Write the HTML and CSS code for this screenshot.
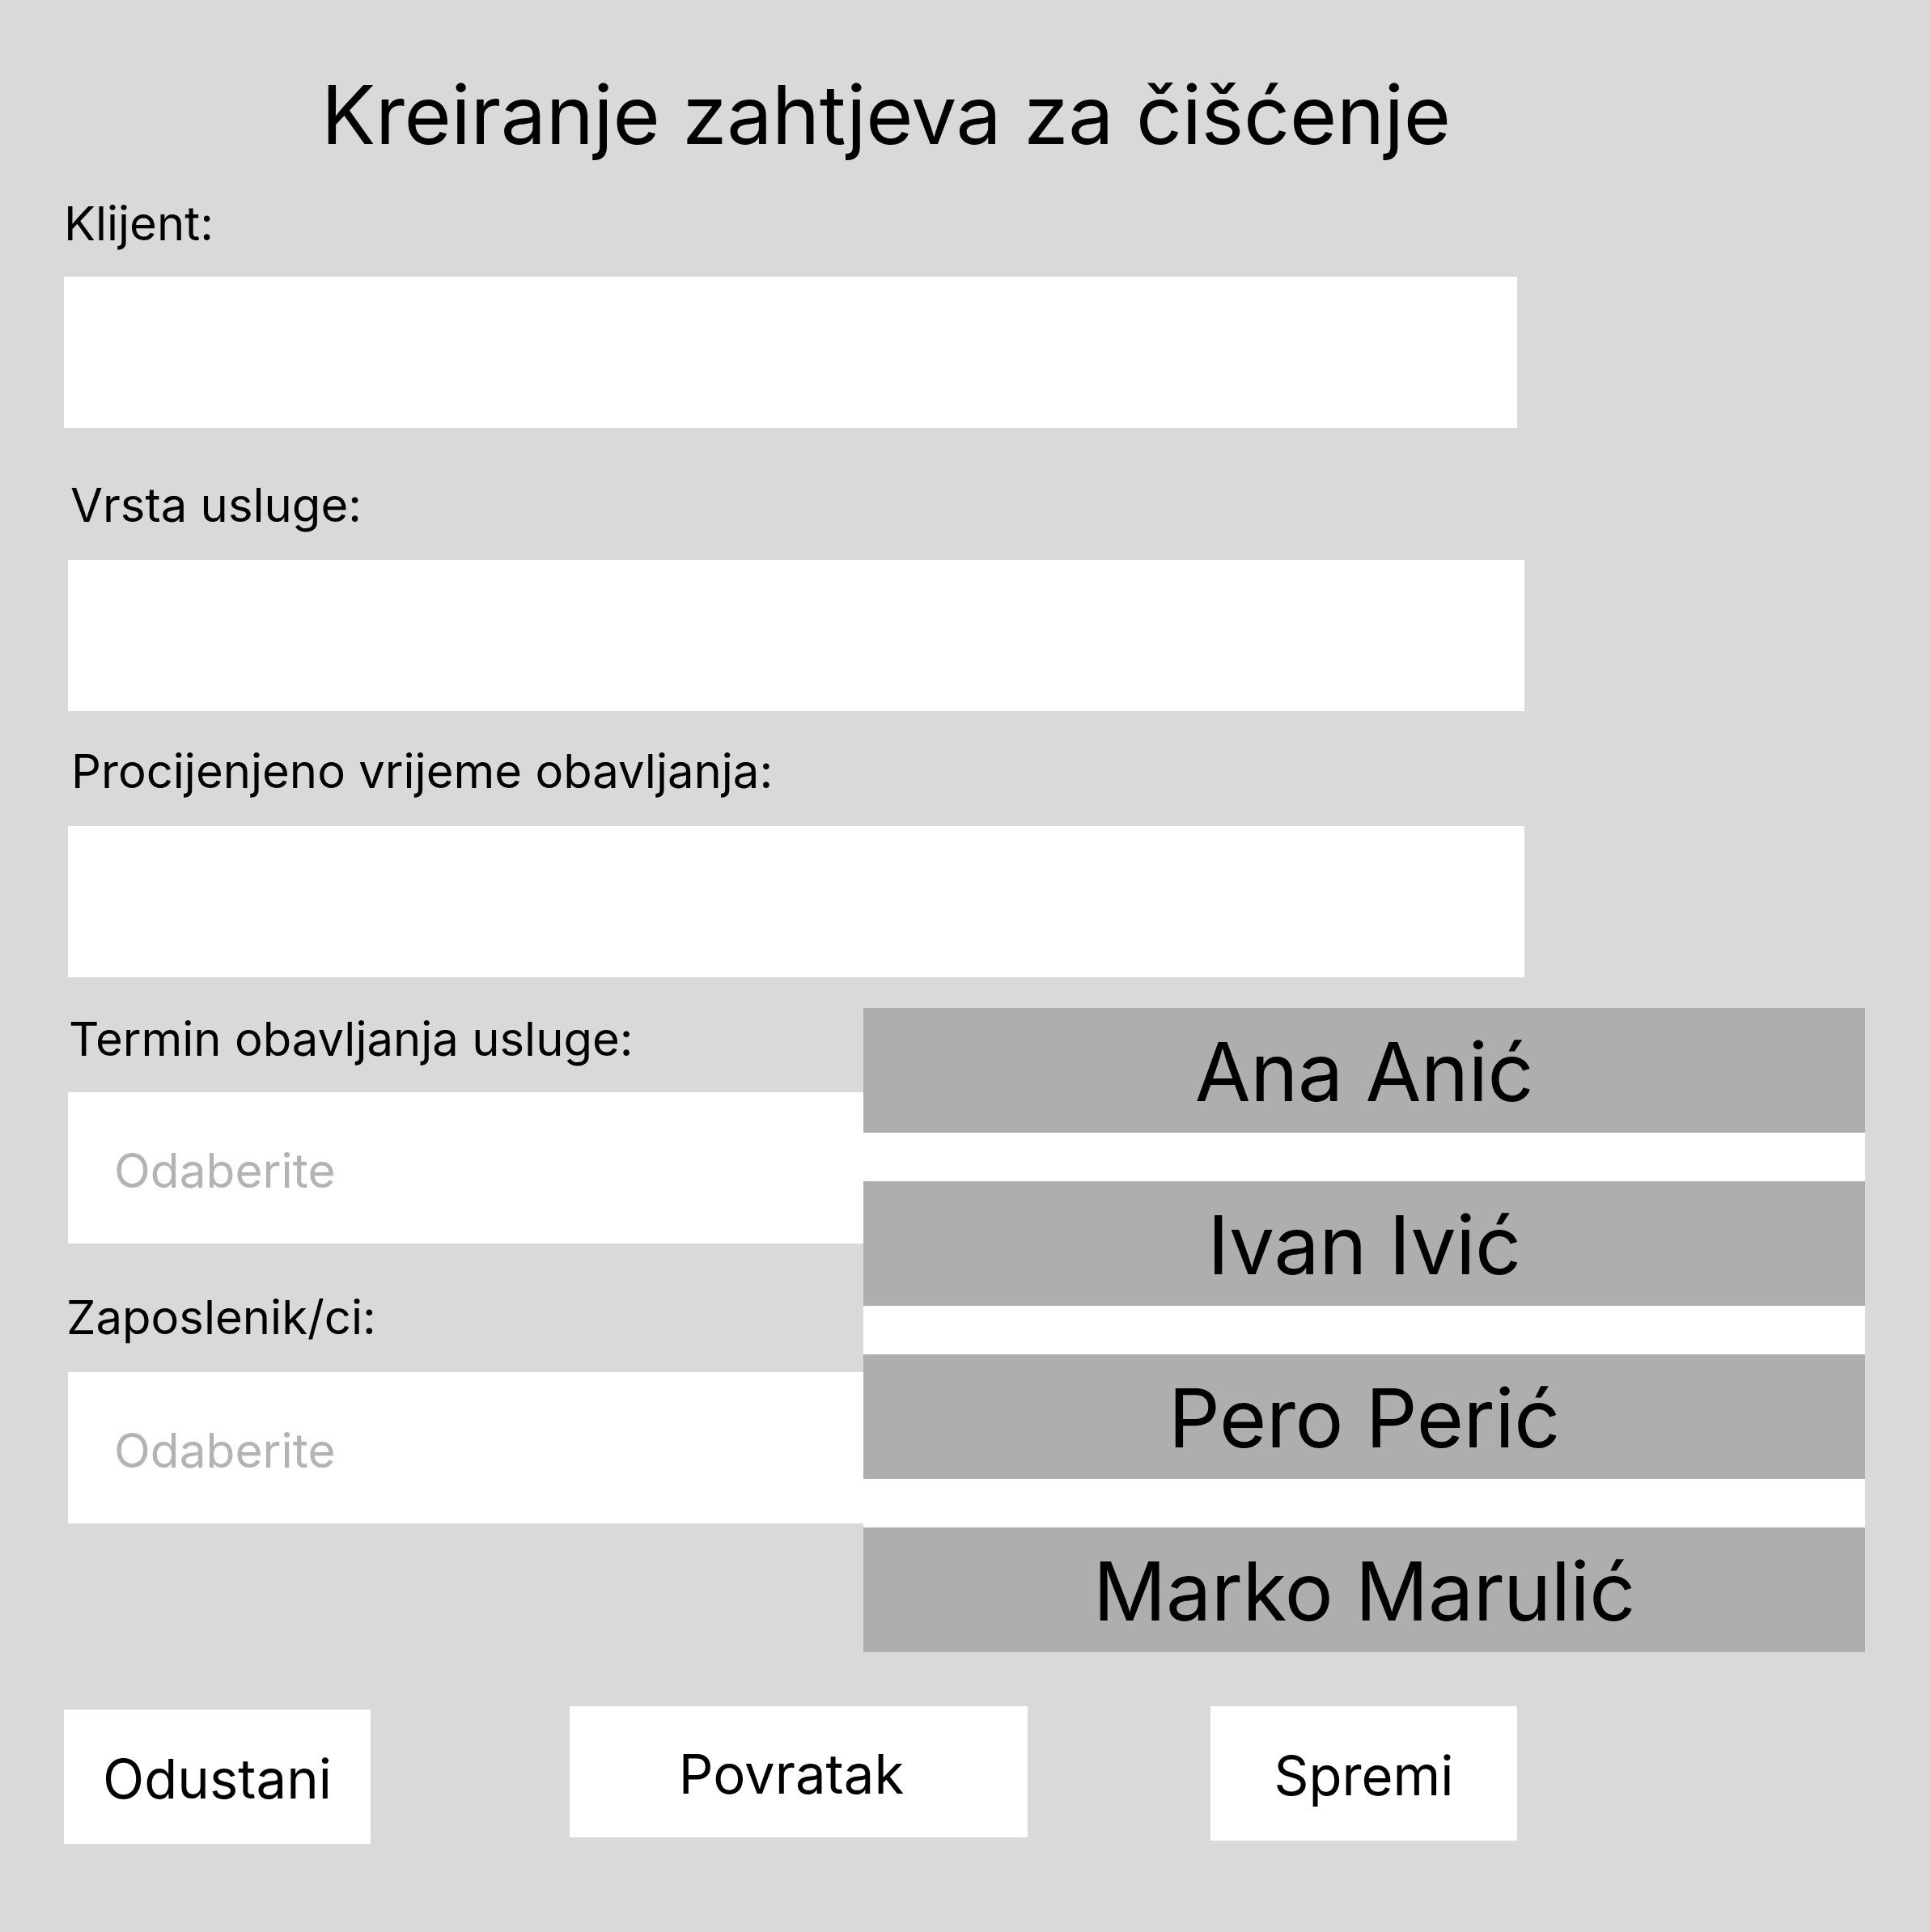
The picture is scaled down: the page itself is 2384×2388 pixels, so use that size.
FILE: index.html
```html
<!DOCTYPE html>
<html lang="hr">
<head>
<meta charset="utf-8">
<title>Kreiranje zahtjeva za čišćenje</title>
<link rel="stylesheet" href="styles.css">
</head>
<body>
<main class="page">
  <h1 class="title">Kreiranje zahtjeva za čišćenje</h1>

  <div class="field field-client">
    <label class="label">Klijent:</label>
    <div class="input"></div>
  </div>

  <div class="field field-service">
    <label class="label">Vrsta usluge:</label>
    <div class="input"></div>
  </div>

  <div class="field field-time">
    <label class="label">Procijenjeno vrijeme obavljanja:</label>
    <div class="input"></div>
  </div>

  <div class="field field-term">
    <label class="label">Termin obavljanja usluge:</label>
    <div class="input select"><span class="placeholder">Odaberite</span></div>
  </div>

  <div class="field field-staff">
    <label class="label">Zaposlenik/ci:</label>
    <div class="input select"><span class="placeholder">Odaberite</span></div>
  </div>

  <div class="actions">
    <button class="btn btn-cancel">Odustani</button>
    <button class="btn btn-back">Povratak</button>
    <button class="btn btn-save">Spremi</button>
  </div>

  <ul class="dropdown">
    <li class="option">Ana Anić</li>
    <li class="option">Ivan Ivić</li>
    <li class="option">Pero Perić</li>
    <li class="option">Marko Marulić</li>
  </ul>
</main>
</body>
</html>
```

FILE: styles.css
```css
* { box-sizing: border-box; }

html, body {
  margin: 0;
  padding: 0;
}

body {
  background: #d9d9d9;
  font-family: "Inter", "Noto Sans", sans-serif;
  color: #000;
  width: 2384px;
  height: 2388px;
  overflow: hidden;
}

.page {
  position: relative;
  width: 2384px;
  height: 2388px;
  padding-top: 82px;
  display: flex;
  flex-direction: column;
}

.title {
  margin: 0;
  padding-left: 397px;
  font-size: 100px;
  font-weight: 400;
  letter-spacing: -0.3px;
  line-height: 120px;
  height: 120px;
}

.field {
  display: flex;
  flex-direction: column;
}

.label {
  display: block;
  font-size: 58px;
  line-height: 70px;
  height: 70px;
}

.input {
  height: 187px;
  background: #fff;
  width: 1800px;
  margin-left: 84px;
  margin-top: 33px;
}

.field-client { margin-top: 39px; }
.field-client .label { padding-left: 79px; }
.field-client .input { margin-left: 79px; width: 1796px; margin-top: 31px; }

.field-service { margin-top: 60px; }
.field-service .label { padding-left: 87px; }

.field-time { margin-top: 39px; }
.field-time .label { padding-left: 88px; }

.field-term { margin-top: 41px; }
.field-term .label { padding-left: 85px; }
.field-term .input { margin-top: 31px; }

.field-staff { margin-top: 56px; }
.field-staff .label { padding-left: 82px; }

.select {
  display: flex;
  align-items: center;
  padding-left: 57px;
  padding-top: 7px;
}

.placeholder {
  font-size: 58.6px;
  line-height: 70px;
  color: #b3b3b3;
}

.actions {
  margin-top: 226px;
  display: flex;
  align-items: flex-start;
  padding-left: 79px;
}

.btn {
  border: none;
  background: #fff;
  font-family: "Inter", "Noto Sans", sans-serif;
  font-size: 67px;
  color: #000;
  padding: 0;
  display: flex;
  align-items: center;
  justify-content: center;
  padding-top: 4px;
}

.btn-cancel {
  width: 379px;
  height: 166px;
  margin-top: 4px;
}

.btn-back {
  width: 566px;
  height: 162px;
  margin-left: 246px;
  padding-right: 18px;
}

.btn-save {
  width: 379px;
  height: 166px;
  margin-left: 226px;
}

.dropdown {
  position: absolute;
  left: 1067px;
  top: 1246px;
  width: 1238px;
  height: 796px;
  margin: 0;
  padding: 0;
  list-style: none;
  background: #fff;
  display: flex;
  flex-direction: column;
  justify-content: space-between;
}

.option {
  height: 154px;
  background: #aeaeae;
  font-size: 100px;
  letter-spacing: -0.4px;
  line-height: 120px;
  display: flex;
  align-items: center;
  justify-content: center;
  padding-top: 4px;
}
```
